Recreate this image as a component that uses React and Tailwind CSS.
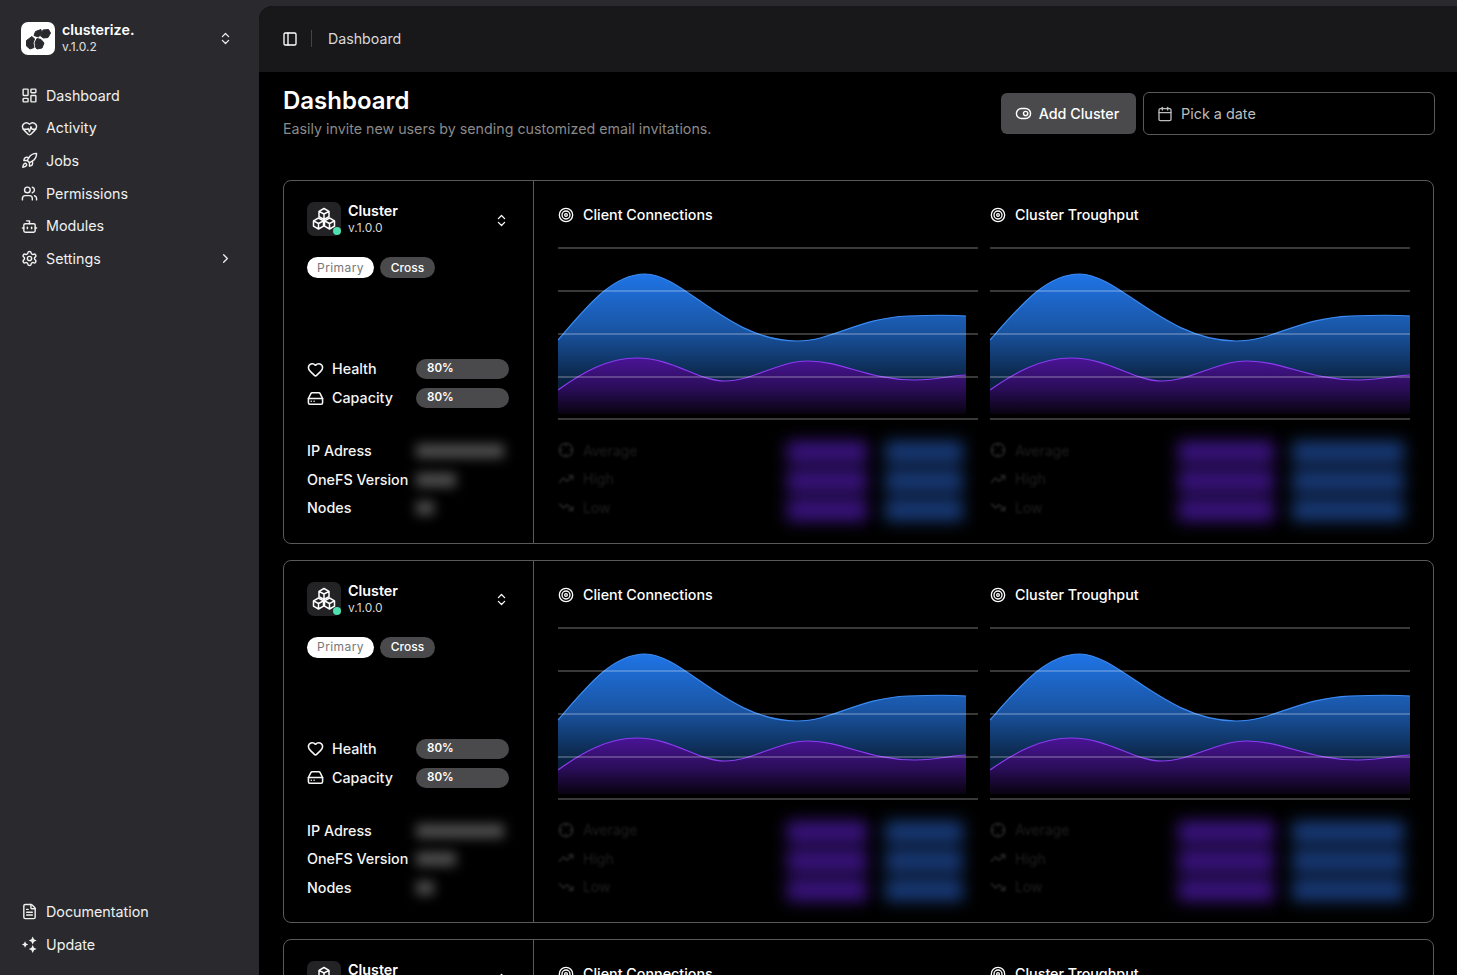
import React from "react";
import {
  Bot, Calendar, ChevronRight, ChevronsUpDown, Crosshair, FileText, HardDrive, Heart, HeartPulse,
  LayoutDashboard, PanelLeft, Rocket, Settings, Target, ToggleRight, TrendingDown, TrendingUp, Users,
} from "lucide-react";

const UpdateIcon = ({ size = 16, className }) => (
  <svg width={size} height={size} viewBox="0 0 16 16" fill="currentColor" className={className}>
    <path d="M3.8 5 L4.8 7 L6.8 8 L4.8 9 L3.8 11 L2.8 9 L0.8 8 L2.8 7 Z" />
    <path d="M11 0.5 L12.2 3 L14.7 4.2 L12.2 5.4 L11 7.9 L9.8 5.4 L7.3 4.2 L9.8 3 Z" />
    <path d="M11 8.5 L12.2 11 L14.7 12.2 L12.2 13.4 L11 15.9 L9.8 13.4 L7.3 12.2 L9.8 11 Z" />
  </svg>
);

const CubesIcon = () => (
  <svg width="24" height="24" viewBox="0 0 24 24" fill="none" stroke="currentColor" strokeWidth="1.5" strokeLinejoin="round" className="text-white">
    <path d="M12 1.5 L17 4.3 V9.7 L12 12.5 L7 9.7 V4.3 Z M7 4.3 L12 7 L17 4.3 M12 7 V12.5" />
    <path d="M6.5 11 L11.5 13.8 V19.2 L6.5 22 L1.5 19.2 V13.8 Z M1.5 13.8 L6.5 16.5 L11.5 13.8 M6.5 16.5 V22" />
    <path d="M17.5 11 L22.5 13.8 V19.2 L17.5 22 L12.5 19.2 V13.8 Z M12.5 13.8 L17.5 16.5 L22.5 13.8 M17.5 16.5 V22" />
  </svg>
);

const navItems = [
  { label: "Dashboard", icon: LayoutDashboard },
  { label: "Activity", icon: HeartPulse },
  { label: "Jobs", icon: Rocket },
  { label: "Permissions", icon: Users },
  { label: "Modules", icon: Bot },
  { label: "Settings", icon: Settings, arrow: true },
];

const NavRow = ({ item }) => {
  const Icon = item.icon;
  return (
    <div className="h-[32.7px] flex items-center gap-[8px] text-[14.3px] text-[#f0f0f0]">
      <Icon size={17} strokeWidth={2} className="shrink-0" />
      <span>{item.label}</span>
      {item.arrow && <ChevronRight size={15} className="ml-auto" />}
    </div>
  );
};

const Sidebar = () => (
  <aside className="w-[259px] shrink-0 h-full flex flex-col pl-[21px] pr-[26px] pt-[22px] pb-[14px]">
    <div className="flex items-center gap-[7px]">
      <div className="w-[34px] h-[33px] rounded-[7px] bg-white">
        <svg width="34" height="33" viewBox="0 0 34 33" fill="#2a2a2e" stroke="#2a2a2e" strokeWidth="1" strokeLinejoin="round">
          <path d="M14.5 9.5 L20 7.5 L20.5 11 L17.5 15 L13 13.5 Z" />
          <path d="M22 8 L27.5 7.5 L29.5 11 L27 15.5 L22.5 16 L19.5 14 Z" />
          <path d="M11 14.5 L13.5 17 L12 21 L13 25.5 L9 27 L5.5 24 L5.5 18.5 Z" />
          <path d="M16 16.5 L20 17.5 L23 21 L21 26 L16 27 L14.5 25 L14 20.5 Z" />
        </svg>
      </div>
      <div className="flex flex-col leading-[17px] mt-[-1px]">
        <span className="text-[14.3px] font-semibold text-white">clusterize.</span>
        <span className="text-[12px] text-[#e0e0e0]">v.1.0.2</span>
      </div>
      <ChevronsUpDown size={15} className="ml-auto text-[#f0f0f0]" />
    </div>
    <nav className="mt-[24px] flex flex-col">
      {navItems.map((item) => (
        <NavRow key={item.label} item={item} />
      ))}
    </nav>
    <div className="mt-auto flex flex-col">
      <NavRow item={{ label: "Documentation", icon: FileText }} />
      <NavRow item={{ label: "Update", icon: UpdateIcon }} />
    </div>
  </aside>
);

const bluePath = "M0 93 C30 58 55 27 87 27 C125 27 170 94 239 94 C275 94 300 71 350 69 C375 68 395 68 408 69";
const purplePath = "M0 143 C25 125 50 111 79 111 C115 111 140 134 167 134 C195 134 220 114 250 114 C285 114 310 133 357 133 C380 133 395 128 408 128";

// second chart runs to the full width, first one stops 12px short
const AreaChart = ({ id, wide }) => (
  <svg viewBox="0 0 420 176" preserveAspectRatio="none" className="w-full h-[176px] block">
    <defs>
      <linearGradient id={`blue-${id}`} x1="0" y1="27" x2="0" y2="135" gradientUnits="userSpaceOnUse">
        <stop offset="0" stopColor="#1f74e6" />
        <stop offset="0.5" stopColor="#1a56a6" />
        <stop offset="1" stopColor="#0a2240" />
      </linearGradient>
      <linearGradient id={`purple-${id}`} x1="0" y1="111" x2="0" y2="167" gradientUnits="userSpaceOnUse">
        <stop offset="0" stopColor="#4a1496" />
        <stop offset="0.55" stopColor="#2a0d58" />
        <stop offset="1" stopColor="#080310" />
      </linearGradient>
    </defs>
    <g transform={wide ? "scale(1.0294 1)" : undefined}>
      <path d={`${bluePath} L408 167 L0 167 Z`} fill={`url(#blue-${id})`} />
      <path d={bluePath} fill="none" stroke="#3b8bf5" strokeWidth="1.2" />
      <path d={`${purplePath} L408 167 L0 167 Z`} fill={`url(#purple-${id})`} />
      <path d={purplePath} fill="none" stroke="#8b3cf0" strokeWidth="1.2" />
    </g>
    {[1, 44, 87, 130, 172].map((y) => (
      <line key={y} x1="0" x2="420" y1={y} y2={y} stroke="#ffffff" strokeOpacity="0.45" strokeWidth="1.2" />
    ))}
  </svg>
);

const legend = [
  { label: "Average", icon: Crosshair },
  { label: "High", icon: TrendingUp },
  { label: "Low", icon: TrendingDown },
];

const ChartBlock = ({ title, id, wide }) => (
  <div className="w-[420px] flex flex-col">
    <div className="flex items-center gap-[9px] h-[20px] text-[14.3px] font-medium text-white">
      <Target size={16} strokeWidth={2} />
      <span>{title}</span>
    </div>
    <div className="mt-[22px]">
      <AreaChart id={id} wide={wide} />
    </div>
    <div className="mt-[17px] relative flex flex-col gap-[8.5px]">
      {legend.map(({ label, icon: Icon }) => (
        <div key={label} className="h-[20px] flex items-center gap-[9px] text-[14px] text-[#1f1f1f] blur-[1px]">
          <Icon size={16} className="text-[#2c2c2c]" />
          <span>{label}</span>
        </div>
      ))}
      <div className={`absolute top-0 flex ${wide ? "left-[188px] gap-[18px]" : "left-[229px] gap-[18px]"}`}>
        <div className={`${wide ? "w-[96px]" : "w-[80px]"} flex flex-col gap-[7px] pt-[1px] blur-[8px]`}>
          {legend.map((l) => <div key={l.label} className="h-[22px] bg-[#3a1380]" />)}
        </div>
        <div className={`${wide ? "w-[112px]" : "w-[78px]"} flex flex-col gap-[7px] pt-[1px] blur-[8px]`}>
          {legend.map((l) => <div key={l.label} className="h-[22px] bg-[#183a78]" />)}
        </div>
      </div>
    </div>
  </div>
);

const Pill = ({ value }) => (
  <div className="w-[93px] h-[20px] rounded-full bg-[#4a4a4c] px-[11px] flex items-center text-[11.6px] font-semibold text-white">
    {value}
  </div>
);

const Stat = ({ icon: Icon, label }) => (
  <div className="h-[20px] flex items-center">
    <div className="w-[109px] flex items-center gap-[8px] text-[14.3px] font-medium text-[#f5f5f5]">
      <Icon size={17} strokeWidth={2.2} />
      <span>{label}</span>
    </div>
    <Pill value="80%" />
  </div>
);

const BlurRow = ({ label, width }) => (
  <div className="h-[20px] flex items-center text-[14.3px] font-medium text-[#f5f5f5]">
    <span className="w-[109px] shrink-0">{label}</span>
    <div className={`${width} h-[14px] bg-[#505050] blur-[6px]`} />
  </div>
);

const ClusterCard = ({ id }) => (
  <div className="h-[363.5px] shrink-0 rounded-[8px] border border-[#5a5a5a] flex">
    <div className="w-[250px] shrink-0 border-r border-[#5a5a5a] pl-[23px] pr-[24px] pt-[21px] flex flex-col">
      <div className="flex items-center">
        <div className="relative w-[34px] h-[34px] rounded-[7px] bg-[#232325] flex items-center justify-center">
          <CubesIcon />
          <span className="absolute right-0 bottom-[1px] w-[8px] h-[8px] rounded-full bg-[#4fe0b0]" />
        </div>
        <div className="ml-[7px] flex flex-col leading-[17px]">
          <span className="text-[14.3px] font-semibold text-white">Cluster</span>
          <span className="text-[12px] text-[#d8d8d8]">v.1.0.0</span>
        </div>
        <ChevronsUpDown size={15} className="ml-auto mt-[2px] text-white" />
      </div>
      <div className="mt-[21px] flex gap-[6px] text-[12px]">
        <span className="h-[21px] w-[67px] justify-center tracking-[0.4px] rounded-full bg-white text-[#777] flex items-center">Primary</span>
        <span className="h-[21px] w-[55px] justify-center rounded-full bg-[#4a4a4c] text-white font-medium flex items-center">Cross</span>
      </div>
      <div className="mt-[81px] flex flex-col gap-[9px]">
        <Stat icon={Heart} label="Health" />
        <Stat icon={HardDrive} label="Capacity" />
      </div>
      <div className="mt-[33px] flex flex-col gap-[8.5px]">
        <BlurRow label="IP Adress" width="w-[88px]" />
        <BlurRow label="OneFS Version" width="w-[40px]" />
        <BlurRow label="Nodes" width="w-[18px]" />
      </div>
    </div>
    <div className="pl-[24px] pt-[24px] flex gap-[12px]">
      <ChartBlock title="Client Connections" id={`${id}a`} />
      <ChartBlock title="Cluster Troughput" id={`${id}b`} wide />
    </div>
  </div>
);

export default function App() {
  return (
    <div className="w-[1457px] h-[975px] flex bg-[#2a2a2e] overflow-hidden font-['Inter',sans-serif]">
      <Sidebar />
      <main className="flex-1 mt-[6px] rounded-tl-[14px] bg-black overflow-hidden flex flex-col">
        <header className="h-[66px] shrink-0 bg-[#18181b] flex items-center pl-[23px] pb-[1px] text-[14.2px] text-[#d8d8d8]">
          <PanelLeft size={16} className="text-white" />
          <div className="w-px h-[17px] bg-[#444] ml-[13px] mr-[16px]" />
          <span>Dashboard</span>
        </header>
        <div className="pl-[24px] pr-[23px] flex flex-col">
          <div className="flex items-start justify-between h-[108px] pt-[14px]">
            <div className="flex flex-col">
              <h1 className="text-[24px] leading-[30px] font-semibold text-white">Dashboard</h1>
              <p className="mt-[2px] text-[14.25px] text-[#8a8a8a]">Easily invite new users by sending customized email invitations.</p>
            </div>
            <div className="flex items-center gap-[7px] mt-[6px] -mr-px">
              <button className="w-[135px] h-[41px] rounded-[6px] bg-[#4a4a4c] flex items-center justify-center gap-[7px] pr-[3px] text-[14.3px] font-medium text-white">
                <ToggleRight size={17} />
                Add Cluster
              </button>
              <button className="w-[292px] h-[43px] rounded-[6px] border border-[#5a5a5a] flex items-center gap-[8px] pl-[13px] text-[14.4px] text-[#bdbdbd]">
                <Calendar size={16} />
                Pick a date
              </button>
            </div>
          </div>
          <div className="flex flex-col gap-[16px]">
            <ClusterCard id="c1" />
            <ClusterCard id="c2" />
            <ClusterCard id="c3" />
          </div>
        </div>
      </main>
    </div>
  );
}
